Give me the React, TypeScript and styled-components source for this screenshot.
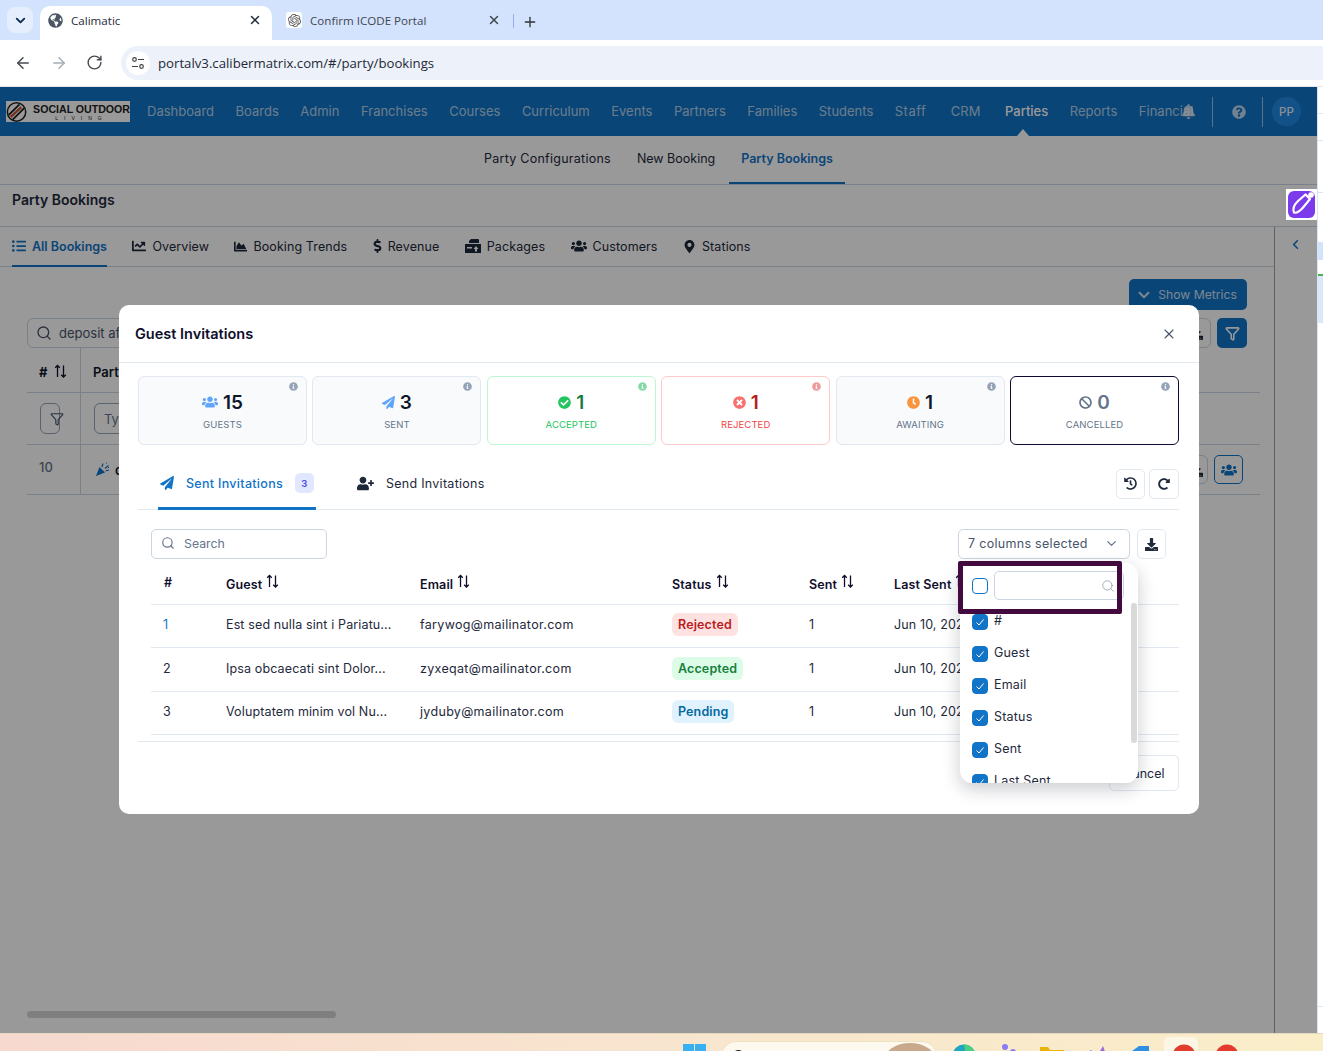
import { FC, ReactNode } from "react";
import styled, { createGlobalStyle } from "styled-components";
import {
  ArrowLeft,
  ArrowRight,
  ChevronDown,
  ChevronLeft,
  Filter,
  Plus,
  RotateCw,
  Search,
  X,
} from "lucide-react";
import {
  FaBan,
  FaBell,
  FaChartArea,
  FaChartLine,
  FaCheckCircle,
  FaClock,
  FaDollarSign,
  FaDownload,
  FaGlobeAmericas,
  FaHistory,
  FaInfoCircle,
  FaListUl,
  FaMapMarkerAlt,
  FaPaperPlane,
  FaQuestionCircle,
  FaRedoAlt,
  FaTimesCircle,
  FaUserPlus,
  FaUsers,
} from "react-icons/fa";
import { SiOpenai } from "react-icons/si";

const GlobalStyle = createGlobalStyle`
  html, body {
    margin: 0;
    padding: 0;
    background: #fff;
  }
  * {
    box-sizing: border-box;
  }
  body {
    font-family: "Inter", "Liberation Sans", sans-serif;
    color: #0f172a;
  }
`;

const Page = styled.div`
  width: 1323px;
  height: 1051px;
  overflow: hidden;
  display: flex;
  flex-direction: column;
  position: relative;
`;

/* browser chrome */
const TabStrip = styled.div`
  height: 40px;
  background: #d3e3fd;
  display: flex;
  align-items: flex-end;
  padding-left: 7px;
  font-family: "Open Sans", sans-serif;
  font-size: 11.6px;
  color: #1f2937;
`;

const TabSwitcher = styled.div`
  width: 26px;
  height: 26px;
  margin: 0 7px 7px 0;
  border-radius: 8px;
  background: #e5eefc;
  display: flex;
  align-items: center;
  justify-content: center;
  color: #0b2a55;
`;

const BrowserTab = styled.div<{ $active?: boolean }>`
  width: ${(p) => (p.$active ? 232 : 239)}px;
  height: 34px;
  padding: 0 10px 6px ${(p) => (p.$active ? 8 : 14)}px;
  border-radius: 10px 10px 0 0;
  background: ${(p) => (p.$active ? "#fff" : "transparent")};
  color: ${(p) => (p.$active ? "#1f2937" : "#3f4650")};
  display: flex;
  align-items: center;
  gap: 8px;
`;

const TabTitle = styled.span`
  flex: 1;
`;

const FavIcon = styled.span`
  width: 16px;
  height: 16px;
  border-radius: 3px;
  background: #fff;
  display: flex;
  align-items: center;
  justify-content: center;
  color: #555;
`;

const TabDivider = styled.div`
  width: 1px;
  height: 14px;
  margin: 0 8px 12px 2px;
  background: #8fb2ea;
`;

const PlusWrap = styled.span`
  margin-bottom: 10px;
  color: #333;
  display: flex;
`;

const Toolbar = styled.div`
  height: 47px;
  background: #fff;
  display: flex;
  align-items: center;
  padding: 0 0 0 14px;
  border-bottom: 1px solid #e5e7eb;
`;

const ToolButton = styled.span<{ $muted?: boolean }>`
  width: 18px;
  height: 18px;
  margin-right: 18px;
  color: ${(p) => (p.$muted ? "#a8aeb5" : "#474b50")};
  display: flex;
`;

const AddressBar = styled.div`
  flex: 1;
  height: 34px;
  margin-left: -1px;
  border-radius: 17px 0 0 17px;
  background: #edf2fa;
  display: flex;
  align-items: center;
  padding-left: 5px;
  gap: 8px;
  font-family: "Open Sans", sans-serif;
  font-size: 13.2px;
  color: #1f2937;
`;

const TuneCircle = styled.span`
  width: 24px;
  height: 24px;
  border-radius: 50%;
  background: #fff;
  display: flex;
  align-items: center;
  justify-content: center;
`;

/* application */
const Viewport = styled.div`
  height: 946px;
  display: flex;
  position: relative;
`;

const AppFrame = styled.div`
  width: 1317px;
  height: 100%;
  position: relative;
  background: #fff;
  display: flex;
  flex-direction: column;
`;

const RightSliver = styled.div`
  flex: 1;
  background: #fff;
  position: relative;
  border-left: 1px solid #dbe4f3;
`;

const SliverMark = styled.div<{ $h: number; $c: string; $mt: number }>`
  height: ${(p) => p.$h}px;
  margin-top: ${(p) => p.$mt}px;
  background: ${(p) => p.$c};
`;

const NavBar = styled.div`
  height: 49px;
  background: #1274c6;
  display: flex;
  align-items: center;
  padding: 0 16px 0 6px;
  position: relative;
`;

const Logo = styled.div`
  width: 124px;
  height: 21px;
  background: #fff;
  display: flex;
  align-items: center;
  margin-right: 17px;
  flex-shrink: 0;
  color: #222;
  overflow: hidden;
`;

const LogoText = styled.div`
  display: flex;
  flex-direction: column;
  align-items: center;
  margin: 2px 0 0 6px;
  font-family: "Liberation Sans", sans-serif;
  font-size: 10.6px;
  font-weight: 700;
  line-height: 11px;
  white-space: nowrap;
  span {
    font-size: 5px;
    line-height: 7px;
    letter-spacing: 6px;
    font-weight: 400;
  }
`;

const NavLinks = styled.div`
  display: flex;
  align-items: center;
  gap: 21.5px;
  width: 1048px;
  padding-bottom: 2px;
  overflow: hidden;
  white-space: nowrap;
  font-size: 13px;
`;

const NavLink = styled.span<{ $active?: boolean; $ml?: number; $ls?: number }>`
  color: ${(p) => (p.$active ? "#fff" : "rgba(255,255,255,0.68)")};
  font-weight: ${(p) => (p.$active ? 500 : 400)};
  margin-left: ${(p) => p.$ml || 0}px;
  letter-spacing: ${(p) => p.$ls || 0}px;
`;

const NavCaret = styled.div`
  position: absolute;
  left: 1017px;
  bottom: 0;
  width: 0;
  height: 0;
  border-left: 6px solid transparent;
  border-right: 6px solid transparent;
  border-bottom: 7px solid #fff;
`;

const NavRight = styled.div`
  display: flex;
  align-items: center;
  color: rgba(255, 255, 255, 0.72);
  margin-left: -12px;
  position: relative;
`;

const NavDivider = styled.div<{ $ml: number; $mr: number }>`
  width: 1px;
  height: 30px;
  margin: 0 ${(p) => p.$mr}px 0 ${(p) => p.$ml}px;
  background: rgba(255, 255, 255, 0.55);
`;

const Avatar = styled.div`
  width: 29px;
  height: 29px;
  border-radius: 50%;
  background: #2189e4;
  color: rgba(255, 255, 255, 0.9);
  font-size: 11.5px;
  font-weight: 500;
  display: flex;
  align-items: center;
  justify-content: center;
`;

const SubNav = styled.div`
  height: 49px;
  border-bottom: 1px solid #cbd5e1;
  display: flex;
  justify-content: center;
  gap: 2px;
  font-size: 12.5px;
`;

const SubNavItem = styled.div<{ $active?: boolean; $ls?: number }>`
  padding: 0 12px 1px;
  height: 48px;
  display: flex;
  align-items: center;
  letter-spacing: ${(p) => p.$ls || 0}px;
  color: ${(p) => (p.$active ? "#1274c6" : "#1e293b")};
  font-weight: ${(p) => (p.$active ? 600 : 400)};
  border-bottom: 2px solid ${(p) => (p.$active ? "#1274c6" : "transparent")};
`;

const TitleRow = styled.div`
  height: 42px;
  padding: 0 12px 12px;
  display: flex;
  align-items: center;
  border-bottom: 1px solid #cbd5e1;
  font-size: 14px;
  font-weight: 600;
  color: #1e293b;
`;

const LowerArea = styled.div`
  flex: 1;
  display: flex;
  min-height: 0;
`;

const MainColumn = styled.div`
  flex: 1;
  min-width: 0;
  display: flex;
  flex-direction: column;
`;

const SideColumn = styled.div`
  width: 43px;
  border-left: 1px solid #a3a3a3;
`;

const SideToggle = styled.div`
  height: 35px;
  padding-right: 2px;
  display: flex;
  align-items: center;
  justify-content: center;
  color: #1274c6;
`;

const PageTabs = styled.div`
  height: 40px;
  border-bottom: 1px solid #cbd5e1;
  padding-left: 12px;
  display: flex;
  gap: 25.4px;
  font-size: 12.5px;
`;

const PageTab = styled.div<{ $active?: boolean }>`
  height: 40px;
  display: flex;
  align-items: center;
  gap: 6px;
  letter-spacing: ${(p) => (p.$active ? 0 : 0.1)}px;
  color: ${(p) => (p.$active ? "#1274c6" : "#1e293b")};
  font-weight: ${(p) => (p.$active ? 600 : 400)};
  border-bottom: 2px solid ${(p) => (p.$active ? "#1274c6" : "transparent")};
  svg {
    flex-shrink: 0;
  }
`;

const DollarIcon = styled(FaDollarSign)`
  width: 9px;
  height: 14px;
`;

const MainBody = styled.div`
  flex: 1;
  display: flex;
  flex-direction: column;
  padding: 12px 14px 15px 27px;
`;

const MetricsRow = styled.div`
  display: flex;
  justify-content: flex-end;
  padding-right: 13px;
`;

const PrimaryButton = styled.div`
  height: 31px;
  width: 118px;
  padding-right: 4px;
  border-radius: 5px;
  background: #1274c6;
  color: rgba(255, 255, 255, 0.8);
  display: flex;
  align-items: center;
  justify-content: center;
  gap: 5px;
  font-size: 12.2px;
`;

const SearchRow = styled.div`
  margin-top: 8px;
  height: 30px;
  display: flex;
  align-items: center;
  justify-content: space-between;
  padding-right: 13px;
`;

const BackSearch = styled.div`
  width: 300px;
  height: 30px;
  border: 1px solid #cbd5e1;
  border-radius: 6px;
  padding-left: 8px;
  display: flex;
  align-items: center;
  gap: 7px;
  color: #475569;
  font-size: 13px;
`;

const IconGroup = styled.div`
  display: flex;
  gap: 6px;
`;

const OutlineSquare = styled.div<{ $w: number; $h: number }>`
  width: ${(p) => p.$w}px;
  height: ${(p) => p.$h}px;
  border: 1px solid #cbd5e1;
  border-radius: 6px;
  color: #1e293b;
  display: flex;
  align-items: center;
  justify-content: center;
`;

const SolidSquare = styled.div`
  width: 30px;
  height: 30px;
  border-radius: 5px;
  background: #1274c6;
  color: #fff;
  display: flex;
  align-items: center;
  justify-content: center;
`;

const BackRow = styled.div<{ $h: number }>`
  height: ${(p) => p.$h}px;
  display: flex;
  align-items: center;
  border-bottom: 1px solid #cbd5e1;
  padding-right: 17px;
`;

const BackCellFirst = styled.div<{ $pt?: number }>`
  width: 54px;
  height: 100%;
  padding: ${(p) => p.$pt || 0}px 0 0 12px;
  border-right: 1px solid #cbd5e1;
  display: flex;
  align-items: center;
  gap: 3px;
  font-size: 13px;
`;

const BackCell = styled.div<{ $pt?: number }>`
  flex: 1;
  padding: ${(p) => p.$pt || 0}px 0 0 12px;
  display: flex;
  align-items: center;
  justify-content: space-between;
  font-size: 13px;
  font-weight: 600;
`;

const MutedNumber = styled.span`
  margin-bottom: 6px;
  color: #64748b;
  font-weight: 500;
`;

const SmallFilter = styled.div`
  width: 20px;
  height: 31px;
  margin-left: 1px;
  border: 1px solid #94a3b8;
  border-radius: 6px;
  color: #475569;
  display: flex;
  align-items: center;
  justify-content: flex-end;
  svg {
    margin-right: -5px;
    flex-shrink: 0;
  }
`;

const BackFilterInput = styled.div`
  width: 100px;
  height: 31px;
  margin-left: 1px;
  padding-left: 9px;
  border: 1px solid #94a3b8;
  border-radius: 6px;
  display: flex;
  align-items: center;
  font-weight: 400;
  color: #64748b;
`;

const PartyName = styled.div`
  margin-left: 2px;
  display: flex;
  align-items: center;
  gap: 5px;
`;

const UserButton = styled.div`
  width: 29px;
  height: 29px;
  border: 1px solid #1274c6;
  border-radius: 5px;
  color: #1274c6;
  display: flex;
  align-items: center;
  justify-content: center;
`;

const HScroll = styled.div`
  margin-top: auto;
  width: 309px;
  height: 7px;
  border-radius: 4px;
  background: #d4d4d4;
`;

/* modal */
const Backdrop = styled.div`
  position: absolute;
  inset: 0;
  background: rgba(0, 0, 0, 0.4);
  padding: 218px 0 0 119px;
`;

const Modal = styled.div`
  width: 1080px;
  height: 509px;
  background: #fff;
  border-radius: 10px;
  display: flex;
  flex-direction: column;
  position: relative;
`;

const ModalHeader = styled.div`
  height: 58px;
  flex-shrink: 0;
  padding: 0 22px 0 16px;
  display: flex;
  align-items: center;
  justify-content: space-between;
  border-bottom: 1px solid #e2e8f0;
  font-size: 14.5px;
  font-weight: 600;
  color: #0f0f2d;
  svg {
    color: #475569;
  }
`;

const ModalBody = styled.div`
  padding: 13px 20px 0 19px;
`;

const StatGrid = styled.div`
  display: grid;
  grid-template-columns: repeat(6, 1fr);
  gap: 5.4px;
`;

type Tone = "plain" | "green" | "red" | "dark";

const toneBorder: Record<Tone, string> = {
  plain: "#e2e8f0",
  green: "#bbf7d0",
  red: "#fecaca",
  dark: "#0b0b33",
};

const toneLabel: Record<Tone, string> = {
  plain: "#64748b",
  green: "#22c55e",
  red: "#ef4444",
  dark: "#64748b",
};

const StatCardBox = styled.div<{ $tone: Tone }>`
  height: 69px;
  border: 1px solid ${(p) => toneBorder[p.$tone]};
  border-radius: 6px;
  background: ${(p) => (p.$tone === "plain" ? "#f8fafc" : "#fff")};
  position: relative;
  display: flex;
  flex-direction: column;
  align-items: center;
  padding-top: 13px;
`;

const StatInfo = styled.span<{ $c: string }>`
  position: absolute;
  top: 5px;
  right: 8px;
  color: ${(p) => p.$c};
  display: flex;
`;

const StatValue = styled.div<{ $c: string }>`
  height: 24px;
  display: flex;
  align-items: center;
  gap: 5px;
  font-size: 19px;
  font-weight: 600;
  color: ${(p) => p.$c};
`;

const StatLabel = styled.div<{ $c: string }>`
  margin-top: 5px;
  font-size: 9.5px;
  letter-spacing: 0.1px;
  color: ${(p) => p.$c};
`;

const TabsRow = styled.div`
  margin-top: 15px;
  height: 50px;
  display: flex;
  align-items: center;
  border-bottom: 1px solid #e2e8f0;
  padding-left: 20px;
`;

const ModalTab = styled.div<{ $active?: boolean }>`
  height: 50px;
  display: flex;
  align-items: center;
  gap: 12px;
  padding: 0 2px 3px;
  margin-right: 39px;
  font-size: 12.5px;
  letter-spacing: ${(p) => (p.$active ? 0.3 : 0.27)}px;
  font-weight: ${(p) => (p.$active ? 500 : 400)};
  color: ${(p) => (p.$active ? "#1274c6" : "#1e293b")};
  box-shadow: ${(p) => (p.$active ? "inset 0 -3px 0 #1274c6" : "none")};
`;

const CountBadge = styled.span`
  width: 19px;
  height: 20px;
  border-radius: 5px;
  background: #e0e7ff;
  color: #4f46e5;
  font-size: 9.5px;
  font-weight: 600;
  display: flex;
  align-items: center;
  justify-content: center;
`;

const TabActions = styled.div`
  margin: 0 0 2px auto;
  display: flex;
  gap: 4px;
`;

const IconButton = styled.div<{ $w?: number }>`
  width: ${(p) => p.$w || 30}px;
  height: 30px;
  border: 1px solid #e2e8f0;
  border-radius: 5px;
  display: flex;
  align-items: center;
  justify-content: center;
  color: #1e293b;
`;

const FilterRow = styled.div`
  margin-top: 19px;
  padding: 0 13px;
  display: flex;
  align-items: center;
`;

const SearchInput = styled.div`
  width: 176px;
  height: 30px;
  border: 1px solid #cbd5e1;
  border-radius: 5px;
  padding: 0 0 2px 9px;
  display: flex;
  align-items: center;
  gap: 9px;
  font-size: 12.3px;
  color: #64748b;
`;

const ColumnSelect = styled.div`
  margin-left: auto;
  width: 172px;
  height: 30px;
  border: 1px solid #cbd5e1;
  border-radius: 5px;
  padding: 0 10px 2px 9px;
  margin-right: 7px;
  display: flex;
  align-items: center;
  justify-content: space-between;
  font-size: 12.5px;
  letter-spacing: 0.3px;
  color: #475569;
`;

const GuestTable = styled.table`
  width: 1028px;
  margin-left: 13px;
  margin-top: 5px;
  border-collapse: collapse;
  table-layout: fixed;
  font-size: 12.5px;
  letter-spacing: 0.13px;
  color: #1e293b;
`;

const Th = styled.th<{ $w?: number }>`
  width: ${(p) => (p.$w ? `${p.$w}px` : "auto")};
  height: 40px;
  padding: 0 0 2px 13px;
  text-align: left;
  font-weight: 600;
  color: #0f0f2d;
  white-space: nowrap;
  border-bottom: 1px solid #e2e8f0;
  overflow: hidden;
`;

const SortIcon = styled.svg`
  width: 13px;
  height: 15px;
  margin-left: 4px;
  color: #0f0f2d;
`;

const Td = styled.td`
  height: 43.5px;
  padding: 0 0 2px 13px;
  white-space: nowrap;
  overflow: hidden;
  border-bottom: 1px solid #e2e8f0;
`;

const EmailTd = styled(Td)`
  letter-spacing: 0.32px;
`;

const IndexCell = styled.span<{ $link?: boolean }>`
  margin-left: -1px;
  color: ${(p) => (p.$link ? "#1274c6" : "#1e293b")};
`;

type StatusKind = "Rejected" | "Accepted" | "Pending";

const statusBg: Record<StatusKind, string> = {
  Rejected: "#fee2e2",
  Accepted: "#dcfce7",
  Pending: "#e0f2fe",
};

const statusFg: Record<StatusKind, string> = {
  Rejected: "#b91c1c",
  Accepted: "#15803d",
  Pending: "#0369a1",
};

const StatusPill = styled.span<{ $kind: StatusKind }>`
  display: inline-block;
  padding: 4px 6px;
  border-radius: 6px;
  background: ${(p) => statusBg[p.$kind]};
  color: ${(p) => statusFg[p.$kind]};
  font-size: 12.5px;
  font-weight: 600;
`;

const ModalFooter = styled.div`
  margin: 6px 20px 0 19px;
  border-top: 1px solid #e2e8f0;
  padding-top: 13px;
  display: flex;
  justify-content: flex-end;
`;

const CancelButton = styled.div`
  width: 70px;
  height: 36px;
  border: 1px solid #e2e8f0;
  border-radius: 5px;
  display: flex;
  align-items: center;
  justify-content: center;
  font-size: 12.5px;
  color: #1e293b;
`;

/* column picker popup */
const ColumnPopup = styled.div`
  position: absolute;
  left: 841px;
  top: 258px;
  width: 178px;
  height: 220px;
  background: #fff;
  border-radius: 12px;
  box-shadow: 0 6px 18px rgba(15, 23, 42, 0.22);
  overflow: hidden;
`;

const PopupHeader = styled.div`
  height: 51px;
  padding: 8px 0 0 12px;
  display: flex;
  gap: 6px;
  align-items: flex-start;
`;

const CheckBox = styled.div<{ $checked?: boolean }>`
  width: 16px;
  height: 16px;
  flex-shrink: 0;
  border-radius: 4px;
  border: 1px solid #1274c6;
  background: ${(p) => (p.$checked ? "#1274c6" : "#fff")};
  color: #fff;
  display: flex;
  align-items: center;
  justify-content: center;
`;

const HeaderCheck = styled.div`
  margin-top: 7px;
`;

const PopupSearch = styled.div`
  width: 130px;
  height: 29px;
  border: 1px solid #cbd5e1;
  border-radius: 5px;
  display: flex;
  align-items: center;
  justify-content: flex-end;
  padding-right: 8px;
  color: #94a3b8;
`;

const PopupList = styled.div`
  padding-left: 12px;
  display: flex;
  flex-direction: column;
  gap: 16px;
`;

const PopupItem = styled.div`
  height: 16px;
  display: flex;
  gap: 6px;
  font-size: 12.5px;
  letter-spacing: 0.2px;
  line-height: 14px;
  color: #1e293b;
`;

const PopupThumb = styled.div`
  position: absolute;
  right: 1px;
  top: 40px;
  width: 6px;
  height: 140px;
  background: #d9d9d9;
  border-radius: 3px;
`;

const Annotation = styled.div`
  position: absolute;
  left: 839px;
  top: 256px;
  width: 164px;
  height: 53px;
  border: 5px solid #430a3f;
  border-radius: 2px;
  pointer-events: none;
`;

const StickerBox = styled.div`
  position: absolute;
  left: 1286px;
  top: 102px;
  width: 31px;
  height: 31px;
  background: #fff;
  display: flex;
  align-items: center;
  justify-content: center;
`;

/* windows taskbar */
const Taskbar = styled.div`
  flex: 1;
  background: linear-gradient(90deg, #f7d9cf 0%, #f8e4cf 45%, #faeec9 100%);
  border-top: 1px solid #e4d9c0;
  overflow: hidden;
  position: relative;
  display: flex;
  padding: 10px 0 0 683px;
`;

const TaskSearch = styled.div`
  width: 216px;
  height: 30px;
  margin: -3px 0 0 14px;
  border-radius: 15px;
  background: #fdf9ef;
  border: 1px solid #ece2c4;
  padding-left: 10px;
  display: flex;
  justify-content: space-between;
  flex-shrink: 0;
`;

const TaskGlyph = styled(Search)`
  margin-top: 7px;
`;

const TaskPhoto = styled.svg`
  width: 52px;
  height: 24px;
  margin-top: 1px;
`;

const TaskIcon = styled.svg<{ $ml: number; $w?: number }>`
  width: ${(p) => p.$w || 24}px;
  height: 24px;
  margin-left: ${(p) => p.$ml}px;
  flex-shrink: 0;
`;

const TaskHighlight = styled.div`
  width: 34px;
  height: 30px;
  margin: -7px 0 0 13px;
  padding: 7px 0 0 8px;
  border-radius: 5px;
  background: rgba(255, 255, 255, 0.5);
  flex-shrink: 0;
`;

const SortArrows: FC = () => (
  <SortIcon viewBox="0 0 13 15" fill="none" stroke="currentColor" strokeWidth="1.3">
    <path d="M3.5 13V1.5M1.2 3.8 3.5 1.5l2.3 2.3M9.5 1.5V13M7.2 10.7l2.3 2.3 2.3-2.3" />
  </SortIcon>
);

const TuneIcon: FC = () => (
  <svg width="14" height="14" viewBox="0 0 14 14" fill="none" stroke="#3c4043" strokeWidth="1.2">
    <circle cx="3.5" cy="3.5" r="1.8" />
    <path d="M7 3.5h6M1 10.5h6" />
    <circle cx="10.5" cy="10.5" r="1.8" />
  </svg>
);

const LogoMark: FC = () => (
  <svg width="22" height="22" viewBox="0 0 22 22" fill="none">
    <circle cx="11" cy="11" r="9.6" stroke="#222" strokeWidth="1.6" />
    <path d="M3 14 14 3M7 19 19 7" stroke="#222" strokeWidth="2" />
    <path d="M5 16 16 6" stroke="#c4502a" strokeWidth="2.4" />
  </svg>
);

const PenSticker: FC = () => (
  <svg width="27" height="27" viewBox="0 0 27 27" fill="none">
    <rect width="27" height="27" rx="6" fill="#7c3aed" />
    <path
      d="M6 21.500C4.500 18 6.500 13.500 10 10l7.500-6.500L22 8l-6.500 8C12.500 19.500 8.500 22.500 6 21.500Z"
      stroke="#fff"
      strokeWidth="2.200"
      strokeLinejoin="round"
    />
    <circle cx="23" cy="4" r="2.800" fill="#fff" />
  </svg>
);

const CheckMark: FC = () => (
  <svg width="10" height="10" viewBox="0 0 10 10" fill="none" stroke="currentColor" strokeWidth="1">
    <path d="M1.500 5.500 4 8l4.500-5.500" />
  </svg>
);

const PartyIcon: FC = () => (
  <svg width="15" height="15" viewBox="0 0 15 15" fill="#1274c6">
    <path d="M1 14 4.500 5l5.500 5.500L1 14Z" />
    <path
      d="M7 5 8 1.500M10 6.500l3.500-3M10.500 9 14 8M11 1h1M13 5.500h1"
      stroke="#1274c6"
      strokeWidth="1.200"
    />
  </svg>
);

const PackagesIcon: FC = () => (
  <svg width="16" height="14" viewBox="0 0 16 14" fill="#1e293b">
    <path d="M6 0h7a1 1 0 0 1 1 1v3H4V2L6 0Z" />
    <path d="M0 5h16v9H0z" />
    <path d="M2 8h5v1.500H2z" fill="#fff" />
    <path d="M11 7l2.500 3H12v2.500h-2V10H8.500z" fill="#fff" />
  </svg>
);

const ChromeIcon: FC<{ ml: number }> = ({ ml }) => (
  <TaskIcon $ml={ml} viewBox="0 0 24 24">
    <circle cx="12" cy="12" r="11.500" fill="#e33b2e" />
    <path d="M17 8h6.500a11.500 11.500 0 0 1-3 11L15 12Z" fill="#f6c026" />
    <circle cx="12" cy="12" r="5" fill="#fff" />
  </TaskIcon>
);

const navItems: { label: string; ml?: number; ls?: number }[] = [
  { label: "Dashboard" },
  { label: "Boards" },
  { label: "Admin" },
  { label: "Franchises" },
  { label: "Courses" },
  { label: "Curriculum" },
  { label: "Events" },
  { label: "Partners" },
  { label: "Families" },
  { label: "Students" },
  { label: "Staff", ls: 0.5 },
  { label: "CRM", ml: 3 },
  { label: "Parties", ml: 3 },
  { label: "Reports" },
  { label: "Financials" },
];

const pageTabs: { label: string; icon: ReactNode; active?: boolean }[] = [
  { label: "All Bookings", icon: <FaListUl size={14} />, active: true },
  { label: "Overview", icon: <FaChartLine size={14} /> },
  { label: "Booking Trends", icon: <FaChartArea size={13} /> },
  { label: "Revenue", icon: <DollarIcon /> },
  { label: "Packages", icon: <PackagesIcon /> },
  { label: "Customers", icon: <FaUsers size={16} /> },
  { label: "Stations", icon: <FaMapMarkerAlt size={13} /> },
];

const stats: {
  value: string;
  label: string;
  icon: ReactNode;
  tone: Tone;
  valueColor: string;
  infoColor: string;
}[] = [
  { value: "15", label: "GUESTS", icon: <FaUsers size={16} color="#60a5fa" />, tone: "plain", valueColor: "#0f172a", infoColor: "#94a3b8" },
  { value: "3", label: "SENT", icon: <FaPaperPlane size={13} color="#60a5fa" />, tone: "plain", valueColor: "#0f172a", infoColor: "#94a3b8" },
  { value: "1", label: "ACCEPTED", icon: <FaCheckCircle size={13} color="#22c55e" />, tone: "green", valueColor: "#15803d", infoColor: "#86d9a5" },
  { value: "1", label: "REJECTED", icon: <FaTimesCircle size={13} color="#f87171" />, tone: "red", valueColor: "#b91c1c", infoColor: "#ee9a9a" },
  { value: "1", label: "AWAITING", icon: <FaClock size={13} color="#fb923c" />, tone: "plain", valueColor: "#0f172a", infoColor: "#94a3b8" },
  { value: "0", label: "CANCELLED", icon: <FaBan size={13} color="#64748b" />, tone: "dark", valueColor: "#64748b", infoColor: "#94a3b8" },
];

const rows: { guest: string; email: string; status: StatusKind }[] = [
  { guest: "Est sed nulla sint i Pariatu...", email: "farywog@mailinator.com", status: "Rejected" },
  { guest: "Ipsa obcaecati sint Dolor...", email: "zyxeqat@mailinator.com", status: "Accepted" },
  { guest: "Voluptatem minim vol Nu...", email: "jyduby@mailinator.com", status: "Pending" },
];

const columnOptions = ["#", "Guest", "Email", "Status", "Sent", "Last Sent"];

const App: FC = () => {
  return (
    <Page>
      <GlobalStyle />
      <TabStrip>
        <TabSwitcher>
          <ChevronDown size={15} strokeWidth={3} />
        </TabSwitcher>
        <BrowserTab $active>
          <FaGlobeAmericas size={15} color="#4b5563" />
          <TabTitle>Calimatic</TabTitle>
          <X size={14} strokeWidth={2.5} />
        </BrowserTab>
        <BrowserTab>
          <FavIcon>
            <SiOpenai size={13} />
          </FavIcon>
          <TabTitle>Confirm ICODE Portal</TabTitle>
          <X size={14} strokeWidth={2.5} />
        </BrowserTab>
        <TabDivider />
        <PlusWrap>
          <Plus size={16} strokeWidth={2} />
        </PlusWrap>
      </TabStrip>
      <Toolbar>
        <ToolButton>
          <ArrowLeft size={18} />
        </ToolButton>
        <ToolButton $muted>
          <ArrowRight size={18} />
        </ToolButton>
        <ToolButton>
          <RotateCw size={17} />
        </ToolButton>
        <AddressBar>
          <TuneCircle>
            <TuneIcon />
          </TuneCircle>
          portalv3.calibermatrix.com/#/party/bookings
        </AddressBar>
      </Toolbar>

      <Viewport>
        <AppFrame>
          <NavBar>
            <Logo>
              <LogoMark />
              <LogoText>
                SOCIAL OUTDOOR
                <span>LIVING</span>
              </LogoText>
            </Logo>
            <NavLinks>
              {navItems.map((item) => (
                <NavLink key={item.label} $active={item.label === "Parties"} $ml={item.ml} $ls={item.ls}>
                  {item.label}
                </NavLink>
              ))}
            </NavLinks>
            <NavRight>
              <FaBell size={15} />
              <NavDivider $ml={16} $mr={19} />
              <FaQuestionCircle size={14} />
              <NavDivider $ml={16} $mr={9} />
              <Avatar>PP</Avatar>
            </NavRight>
            <NavCaret />
          </NavBar>
          <SubNav>
            <SubNavItem $ls={0.25}>Party Configurations</SubNavItem>
            <SubNavItem>New Booking</SubNavItem>
            <SubNavItem $active>Party Bookings</SubNavItem>
          </SubNav>
          <TitleRow>Party Bookings</TitleRow>
          <LowerArea>
            <MainColumn>
              <PageTabs>
                {pageTabs.map((tab) => (
                  <PageTab key={tab.label} $active={tab.active}>
                    {tab.icon}
                    {tab.label}
                  </PageTab>
                ))}
              </PageTabs>
              <MainBody>
                <MetricsRow>
                  <PrimaryButton>
                    <ChevronDown size={18} strokeWidth={2.5} />
                    Show Metrics
                  </PrimaryButton>
                </MetricsRow>
                <SearchRow>
                  <BackSearch>
                    <Search size={16} />
                    deposit after
                  </BackSearch>
                  <IconGroup>
                    <OutlineSquare $w={30} $h={30}>
                      <FaDownload size={14} />
                    </OutlineSquare>
                    <SolidSquare>
                      <Filter size={15} strokeWidth={2.5} />
                    </SolidSquare>
                  </IconGroup>
                </SearchRow>
                <BackRow $h={45}>
                  <BackCellFirst $pt={3}>
                    <b>#</b>
                    <SortArrows />
                  </BackCellFirst>
                  <BackCell $pt={3}>Party</BackCell>
                </BackRow>
                <BackRow $h={52}>
                  <BackCellFirst>
                    <SmallFilter>
                      <Filter size={14} />
                    </SmallFilter>
                  </BackCellFirst>
                  <BackCell>
                    <BackFilterInput>Type</BackFilterInput>
                  </BackCell>
                </BackRow>
                <BackRow $h={50}>
                  <BackCellFirst>
                    <MutedNumber>10</MutedNumber>
                  </BackCellFirst>
                  <BackCell>
                    <PartyName>
                      <PartyIcon />c
                    </PartyName>
                    <IconGroup>
                      <OutlineSquare $w={24} $h={29}>
                        <FaDownload size={14} />
                      </OutlineSquare>
                      <UserButton>
                        <FaUsers size={16} />
                      </UserButton>
                    </IconGroup>
                  </BackCell>
                </BackRow>
                <HScroll />
              </MainBody>
            </MainColumn>
            <SideColumn>
              <SideToggle>
                <ChevronLeft size={15} strokeWidth={2.5} />
              </SideToggle>
            </SideColumn>
          </LowerArea>

          <Backdrop>
            <Modal>
              <ModalHeader>
                Guest Invitations
                <X size={16} strokeWidth={1.6} />
              </ModalHeader>
              <ModalBody>
                <StatGrid>
                  {stats.map((s) => (
                    <StatCardBox key={s.label} $tone={s.tone}>
                      <StatInfo $c={s.infoColor}>
                        <FaInfoCircle size={9} />
                      </StatInfo>
                      <StatValue $c={s.valueColor}>
                        {s.icon}
                        {s.value}
                      </StatValue>
                      <StatLabel $c={toneLabel[s.tone]}>{s.label}</StatLabel>
                    </StatCardBox>
                  ))}
                </StatGrid>
                <TabsRow>
                  <ModalTab $active>
                    <FaPaperPlane size={14} />
                    Sent Invitations
                    <CountBadge>3</CountBadge>
                  </ModalTab>
                  <ModalTab>
                    <FaUserPlus size={17} />
                    Send Invitations
                  </ModalTab>
                  <TabActions>
                    <IconButton $w={29}>
                      <FaHistory size={13} />
                    </IconButton>
                    <IconButton>
                      <FaRedoAlt size={12} />
                    </IconButton>
                  </TabActions>
                </TabsRow>
                <FilterRow>
                  <SearchInput>
                    <Search size={14} />
                    Search
                  </SearchInput>
                  <ColumnSelect>
                    7 columns selected
                    <ChevronDown size={15} color="#64748b" />
                  </ColumnSelect>
                  <IconButton $w={29}>
                    <FaDownload size={13} />
                  </IconButton>
                </FilterRow>
                <GuestTable>
                  <thead>
                    <tr>
                      <Th $w={62}>#</Th>
                      <Th $w={194}>
                        Guest
                        <SortArrows />
                      </Th>
                      <Th $w={252}>
                        Email
                        <SortArrows />
                      </Th>
                      <Th $w={137}>
                        Status
                        <SortArrows />
                      </Th>
                      <Th $w={85}>
                        Sent
                        <SortArrows />
                      </Th>
                      <Th>
                        Last Sent
                        <SortArrows />
                      </Th>
                    </tr>
                  </thead>
                  <tbody>
                    {rows.map((row, i) => (
                      <tr key={row.email}>
                        <Td>
                          <IndexCell $link={i === 0}>{i + 1}</IndexCell>
                        </Td>
                        <Td>{row.guest}</Td>
                        <EmailTd>{row.email}</EmailTd>
                        <Td>
                          <StatusPill $kind={row.status}>{row.status}</StatusPill>
                        </Td>
                        <Td>1</Td>
                        <Td>Jun 10, 2025</Td>
                      </tr>
                    ))}
                  </tbody>
                </GuestTable>
              </ModalBody>
              <ModalFooter>
                <CancelButton>Cancel</CancelButton>
              </ModalFooter>

              <ColumnPopup>
                <PopupHeader>
                  <HeaderCheck>
                    <CheckBox />
                  </HeaderCheck>
                  <PopupSearch>
                    <Search size={14} strokeWidth={1.5} />
                  </PopupSearch>
                </PopupHeader>
                <PopupList>
                  {columnOptions.map((option) => (
                    <PopupItem key={option}>
                      <CheckBox $checked>
                        <CheckMark />
                      </CheckBox>
                      {option}
                    </PopupItem>
                  ))}
                </PopupList>
                <PopupThumb />
              </ColumnPopup>
              <Annotation />
            </Modal>
          </Backdrop>
          <StickerBox>
            <PenSticker />
          </StickerBox>
        </AppFrame>
        <RightSliver>
          <SliverMark $h={1} $c="#dbe4f3" $mt={26} />
          <SliverMark $h={1} $c="#dbe4f3" $mt={26} />
          <SliverMark $h={1} $c="#dbe4f3" $mt={51} />
          <SliverMark $h={18} $c="#d3e3fb" $mt={49} />
          <SliverMark $h={2} $c="#4caf50" $mt={14} />
          <SliverMark $h={47} $c="#dbe8fb" $mt={0} />
          <SliverMark $h={1} $c="#dbe4f3" $mt={683} />
        </RightSliver>
      </Viewport>

      <Taskbar>
        <TaskIcon $ml={0} viewBox="0 0 24 24">
          <path d="M0 0h11v11H0zM12 0h11v11H12zM0 12h11v11H0zM12 12h11v11H12z" fill="#38b0f2" />
        </TaskIcon>
        <TaskSearch>
          <TaskGlyph size={14} color="#222" strokeWidth={3} />
          <TaskPhoto viewBox="0 0 52 24">
            <ellipse cx="26" cy="18" rx="26" ry="18" fill="#c9a98c" />
          </TaskPhoto>
        </TaskSearch>
        <TaskIcon $ml={15} viewBox="0 0 24 24">
          <circle cx="12" cy="12" r="11.500" fill="#1ea5c0" />
          <path d="M12 .5A11.500 11.500 0 0 1 23.500 12H14Z" fill="#4ccf80" />
        </TaskIcon>
        <TaskIcon $ml={24} $w={18} viewBox="0 0 18 24">
          <circle cx="5" cy="3" r="3" fill="#8b7cf6" />
          <circle cx="13" cy="8" r="3" fill="#8b7cf6" />
        </TaskIcon>
        <TaskIcon $ml={22} viewBox="0 0 24 24">
          <path d="M0 3h8l2 3h14v18H0z" fill="#eab308" />
        </TaskIcon>
        <TaskIcon $ml={19} $w={28} viewBox="0 0 28 24">
          <path d="M0 12 8 6l6 6 6-10 8 22H0z" fill="#a06ae0" />
        </TaskIcon>
        <TaskIcon $ml={14} $w={26} viewBox="0 0 26 24">
          <path d="M0 12 14 2l10 0v22H0z" fill="#2f8fe0" />
        </TaskIcon>
        <TaskHighlight>
          <ChromeIcon ml={0} />
        </TaskHighlight>
        <ChromeIcon ml={17} />
      </Taskbar>
    </Page>
  );
};

export default App;
